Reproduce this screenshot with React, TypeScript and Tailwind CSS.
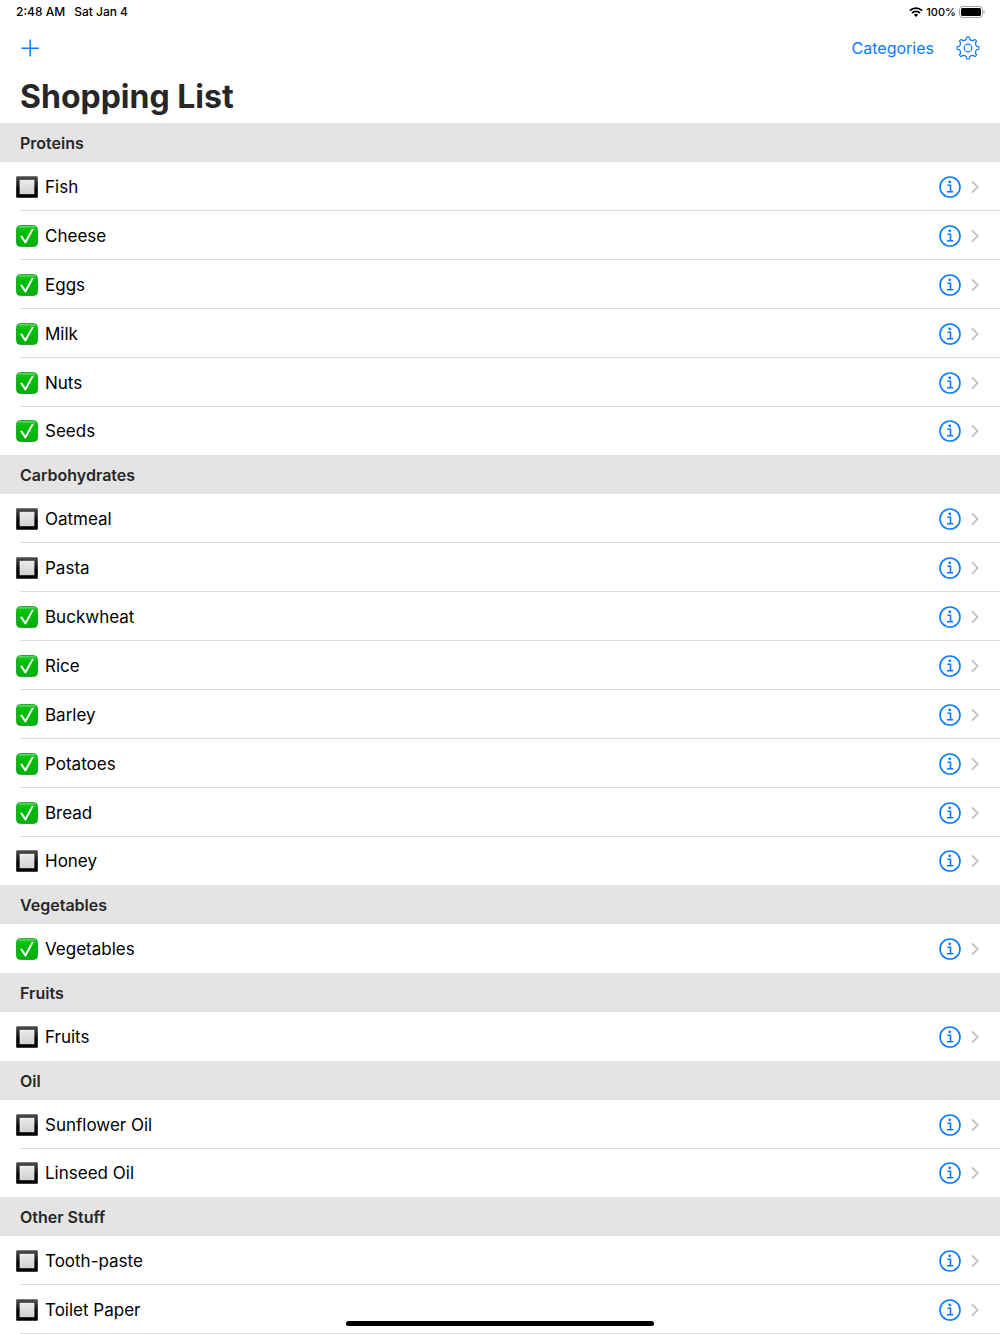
import { useState } from 'react'

const sections = [
  {
    title: 'Proteins',
    items: [
      { name: 'Fish', checked: false },
      { name: 'Cheese', checked: true },
      { name: 'Eggs', checked: true },
      { name: 'Milk', checked: true },
      { name: 'Nuts', checked: true },
      { name: 'Seeds', checked: true }
    ]
  },
  {
    title: 'Carbohydrates',
    items: [
      { name: 'Oatmeal', checked: false },
      { name: 'Pasta', checked: false },
      { name: 'Buckwheat', checked: true },
      { name: 'Rice', checked: true },
      { name: 'Barley', checked: true },
      { name: 'Potatoes', checked: true },
      { name: 'Bread', checked: true },
      { name: 'Honey', checked: false }
    ]
  },
  { title: 'Vegetables', items: [{ name: 'Vegetables', checked: true }] },
  { title: 'Fruits', items: [{ name: 'Fruits', checked: false }] },
  {
    title: 'Oil',
    items: [
      { name: 'Sunflower Oil', checked: false },
      { name: 'Linseed Oil', checked: false }
    ]
  },
  {
    title: 'Other Stuff',
    items: [
      { name: 'Tooth-paste', checked: false },
      { name: 'Toilet Paper', checked: false }
    ]
  }
]

// Outline of an eight-toothed gear centred on 12,12, with rounded valleys
function polar(angle: number, radius: number) {
  const rad = ((angle - 90) * Math.PI) / 180
  return `${(12 + radius * Math.cos(rad)).toFixed(2)} ${(12 + radius * Math.sin(rad)).toFixed(2)}`
}

const gearPath =
  Array.from({ length: 8 }, (_, tooth) => {
    const a = tooth * 45
    return [
      `${tooth === 0 ? 'M' : 'L'}${polar(a - 10, 9.2)}`,
      `L${polar(a - 8, 10.3)}`,
      `Q${polar(a - 6.5, 11.1)} ${polar(a - 3, 11.1)}`,
      `L${polar(a + 3, 11.1)}`,
      `Q${polar(a + 6.5, 11.1)} ${polar(a + 8, 10.3)}`,
      `L${polar(a + 10, 9.2)}`,
      `Q${polar(a + 22.5, 7.6)} ${polar(a + 35, 9.2)}`
    ].join('')
  }).join('') + 'Z'

function GearIcon() {
  return (
    <svg viewBox="0 0 24 24" className="size-6" fill="none" stroke="currentColor" strokeWidth="1.2" strokeLinejoin="round">
      <path d={gearPath} />
      <circle cx="12" cy="12" r="3.8" />
    </svg>
  )
}

function WifiIcon() {
  return (
    <svg viewBox="0 0 14 10" className="h-[10px] w-[14px]" fill="none" stroke="currentColor" strokeWidth="1.9">
      <path d="M0.9 3.6a8.7 8.7 0 0 1 12.2 0" />
      <path d="M3.1 6a5.5 5.5 0 0 1 7.8 0" />
      <path d="M7 9.9 4.9 7.8a3 3 0 0 1 4.2 0z" fill="currentColor" stroke="none" />
    </svg>
  )
}

function BatteryIcon() {
  return (
    <svg viewBox="0 0 26 12" className="h-3 w-[26px]">
      <rect x="0.5" y="0.5" width="23" height="11" rx="3" fill="none" stroke="#a3a3a3" />
      <rect x="2" y="2" width="20" height="8" rx="1.6" fill="#000" />
      <path d="M24.5 4v4c.8-.3 1.2-1.1 1.2-2s-.4-1.7-1.2-2z" fill="#a3a3a3" />
    </svg>
  )
}

function InfoIcon() {
  return (
    <svg viewBox="0 0 22 22" className="size-[22px]" fill="none" stroke="currentColor" strokeWidth="1.6">
      <circle cx="11" cy="11" r="10" />
      <circle cx="10.8" cy="5.8" r="1.4" fill="currentColor" stroke="none" />
      <path d="M8.4 9.3h3.1v6.3M8 15.8h6.2" />
    </svg>
  )
}

function Row({ name, checked }: { name: string; checked: boolean }) {
  const [done, setDone] = useState(checked)

  return (
    <li className="flex h-[49px] items-stretch pl-4 last:h-12 only:h-[49px]">
      <label className="relative flex grow items-center gap-[7px] text-[17px] leading-6">
        <input
          type="checkbox"
          checked={done}
          onChange={() => setDone(!done)}
          className="size-[22px] shrink-0 appearance-none"
        />
        <svg viewBox="0 0 22 22" className="pointer-events-none absolute left-0 size-[22px]">
          {done ? (
            <>
              <rect x="0.5" y="0.5" width="21" height="21" rx="4" fill="url(#tick)" stroke="#129a1c" strokeWidth="0.8" />
              <path d="M2.5 1.9h17" stroke="#7be27f" strokeWidth="0.9" strokeLinecap="round" />
              <path
                d="M4.1 11.2c.6-.9 1.7-.9 2.3-.1l2.9 4.4L15.6 4.2c.5-.7 1.7-.7 2.2-.1L10.4 17.8c-.5.8-1.5.8-2 0z"
                fill="#fff"
              />
            </>
          ) : (
            <>
              <rect x="0.2" y="0.2" width="21.6" height="21.6" rx="0.8" fill="url(#frame)" />
              <rect x="3.6" y="3.8" width="14.8" height="14.4" fill="url(#pane)" />
            </>
          )}
        </svg>
        <span>{name}</span>
      </label>
      <button type="button" aria-label={`Details for ${name}`} className="flex items-center pr-[10px] text-[#087cff]">
        <InfoIcon />
      </button>
      <div className="flex items-center pr-[21px]">
        <svg viewBox="0 0 8 14" className="h-[14px] w-2" fill="none" stroke="#c2c2c6" strokeWidth="1.9">
          <path d="M1 1.4 6.6 7 1 12.6" />
        </svg>
      </div>
    </li>
  )
}

export default function App() {
  return (
    <div className="relative h-screen overflow-hidden bg-white font-[Inter,sans-serif] text-black">
      {/* Gradients shared by the tick boxes */}
      <svg className="absolute size-0" aria-hidden="true">
        <defs>
          <linearGradient id="frame" x1="0" y1="0" x2="0" y2="1">
            <stop offset="0" stopColor="#505050" />
            <stop offset="0.6" stopColor="#000" />
          </linearGradient>
          <linearGradient id="pane" x1="0" y1="0" x2="0" y2="1">
            <stop offset="0" stopColor="#ececec" />
            <stop offset="1" stopColor="#d0d0d0" />
          </linearGradient>
          <linearGradient id="tick" x1="0" y1="0" x2="0" y2="1">
            <stop offset="0" stopColor="#1fcb26" />
            <stop offset="0.3" stopColor="#00be06" />
            <stop offset="1" stopColor="#00b008" />
          </linearGradient>
        </defs>
      </svg>

      <div className="flex h-6 items-center justify-between pr-[15px] pl-4 font-medium">
        <div className="flex gap-[9px] text-xs">
          <span>2:48 AM</span>
          <span>Sat Jan 4</span>
        </div>
        <div className="flex items-center gap-[3px] text-[11px]">
          <WifiIcon />
          <span>100%</span>
          <BatteryIcon />
        </div>
      </div>

      <nav className="flex h-12 items-center justify-between px-5 text-[#087cff]">
        <button type="button" aria-label="Add item">
          <svg viewBox="0 0 20 20" className="size-5" fill="none" stroke="currentColor" strokeWidth="1.5">
            <path d="M10.2 1.5v17M1.5 10.2h17.4" />
          </svg>
        </button>
        <div className="flex items-center gap-[22px]">
          <button type="button" className="text-base">
            Categories
          </button>
          <button type="button" aria-label="Settings">
            <GearIcon />
          </button>
        </div>
      </nav>

      <h1 className="h-[51px] px-5 text-[32px] leading-[50px] font-bold text-[#272727]">Shopping List</h1>

      <main>
        {sections.map((section) => (
          <section key={section.title} className="group">
            <h2 className="flex h-[39px] items-center bg-[#e4e4e4] px-5 text-base font-semibold text-[#272727]">
              {section.title}
            </h2>
            <ul className="[&>li:not(:last-child)]:bg-[linear-gradient(#dcdcde,#dcdcde)] [&>li]:bg-[length:100%_1px] [&>li]:bg-[position:20px_100%] [&>li]:bg-no-repeat group-last:[&>li]:bg-[linear-gradient(#dcdcde,#dcdcde)] group-last:[&>li]:h-[49px]">
              {section.items.map((item) => (
                <Row key={item.name} {...item} />
              ))}
            </ul>
          </section>
        ))}
      </main>

      {/* Home indicator */}
      <div className="absolute bottom-2 left-1/2 h-[5px] w-[308px] -translate-x-1/2 rounded-full bg-black" />
    </div>
  )
}
